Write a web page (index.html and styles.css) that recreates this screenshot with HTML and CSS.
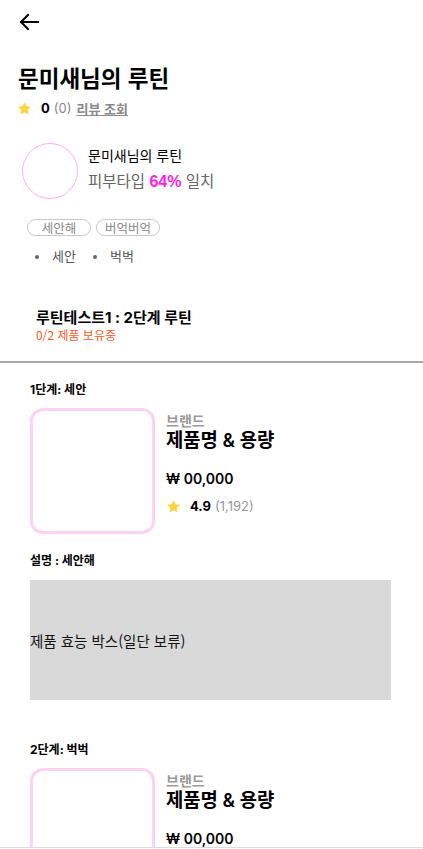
FILE: index.html
```html
<!DOCTYPE html>
<html lang="ko">
<head>
<meta charset="utf-8">
<title>문미새님의 루틴</title>
<link rel="stylesheet" href="styles.css">
</head>
<body>
<header class="top">
  <button class="back" aria-label="뒤로">
    <svg width="24" height="24" viewBox="0 0 24 24" fill="none" stroke="#000" stroke-width="2" stroke-linecap="square"><path d="M21 12H4"/><path d="M11 5l-7 7 7 7"/></svg>
  </button>
</header>
<section class="intro">
  <h1 class="title">문미새님의 루틴</h1>
  <div class="rating">
    <svg class="star" width="15" height="15" viewBox="0 0 24 24"><path fill="#FFD43B" d="M12 1.8l3.1 6.6 7.2.9-5.3 5 1.4 7.1L12 17.9l-6.4 3.5 1.4-7.1-5.3-5 7.2-.9z"/></svg>
    <b class="score">0</b><span class="count">(0)</span><a class="reviews">리뷰 조회</a>
  </div>
  <div class="profile">
    <div class="avatar"></div>
    <div class="profile-info">
      <p class="name">문미새님의 루틴</p>
      <p class="match">피부타입 <strong>64%</strong> 일치</p>
    </div>
  </div>
  <div class="tags"><span class="tag">세안해</span><span class="tag">버억버억</span></div>
  <ul class="step-list"><li>세안</li><li>벅벅</li></ul>
  <div class="summary">
    <h2>루틴테스트1 : 2단계 루틴</h2>
    <p class="owned">0/2 제품 보유중</p>
  </div>
</section>
<hr class="divider">
<section class="steps">
  <article class="step">
    <h3 class="label">1단계: 세안</h3>
    <div class="product">
      <div class="thumb"></div>
      <div class="info">
        <p class="brand">브랜드</p>
        <p class="pname">제품명 &amp; 용량</p>
        <p class="price">₩ 00,000</p>
        <div class="prating">
          <svg width="15" height="15" viewBox="0 0 24 24"><path fill="#FFD43B" d="M12 1.8l3.1 6.6 7.2.9-5.3 5 1.4 7.1L12 17.9l-6.4 3.5 1.4-7.1-5.3-5 7.2-.9z"/></svg>
          <b>4.9</b><span>(1,192)</span>
        </div>
      </div>
    </div>
    <h3 class="label desc">설명 : 세안해</h3>
    <div class="benefit">제품 효능 박스(일단 보류)</div>
  </article>
  <article class="step">
    <h3 class="label">2단계: 벅벅</h3>
    <div class="product">
      <div class="thumb"></div>
      <div class="info">
        <p class="brand">브랜드</p>
        <p class="pname">제품명 &amp; 용량</p>
        <p class="price">₩ 00,000</p>
        <div class="prating">
          <svg width="15" height="15" viewBox="0 0 24 24"><path fill="#FFD43B" d="M12 1.8l3.1 6.6 7.2.9-5.3 5 1.4 7.1L12 17.9l-6.4 3.5 1.4-7.1-5.3-5 7.2-.9z"/></svg>
          <b>4.9</b><span>(1,192)</span>
        </div>
      </div>
    </div>
  </article>
</section>
<nav class="bottom-bar"></nav>
</body>
</html>
```
FILE: styles.css
```css
* { box-sizing: border-box; }
html, body { margin: 0; padding: 0; background: #fff; }
body {
  font-family: "Inter", "Noto Sans CJK KR", sans-serif;
  color: #000;
  overflow: hidden;
}
p, h1, h2, h3 { margin: 0; }

.top { height: 46px; padding: 10px 0 0 17px; }
.back { background: none; border: 0; padding: 0; width: 24px; height: 24px; display: block; }

.intro { padding: 0 18px; }
.title {
  font-family: "Noto Sans CJK KR", sans-serif;
  font-size: 22.5px; font-weight: 700; line-height: 32px;
  margin-top: 15px;
}
.rating {
  display: flex; align-items: center; height: 20px; margin-top: 5px;
  font-size: 13px; color: #888;
}
.rating .star { margin-right: 9px; margin-left: -1px; }
.score { color: #000; font-weight: 700; margin-right: 4px; }
.count { margin-right: 5px; }
.reviews { color: #888; font-weight: 700; text-decoration: underline; font-family: "Noto Sans CJK KR", sans-serif; }

.profile { display: flex; align-items: center; margin-top: 25px; padding-left: 4px; gap: 10px; }
.avatar { width: 56px; height: 56px; border-radius: 50%; border: 1px solid #ffb0e8; flex: none; }
.profile-info { font-family: "Noto Sans CJK KR", sans-serif; }
.name { font-size: 14px; line-height: 20px; margin-top: -6px; }
.match { font-size: 15.5px; line-height: 20px; margin-top: 5px; color: #666; }
.match strong { color: #ff1ee8; font-family: "Liberation Sans", sans-serif; font-weight: 700; font-size: 16px; }

.tags { display: flex; gap: 5px; margin-top: 20px; padding-left: 9px; }
.tag {
  font-family: "Noto Sans CJK KR", sans-serif;
  font-size: 12.5px; color: #888;
  width: 64px; height: 17px;
  display: flex; align-items: center; justify-content: center;
  border: 1px solid #c8c8c8; border-radius: 9px;
}
.step-list {
  list-style: none; margin: 11px 0 0; padding: 0 0 0 17px;
  display: flex; gap: 17px;
  font-family: "Noto Sans CJK KR", sans-serif; font-size: 13px; color: #555; line-height: 18px;
}
.step-list li { position: relative; padding-left: 17px; }
.step-list li::before {
  content: ""; position: absolute; left: 0; top: 8px;
  width: 4px; height: 4px; border-radius: 50%; background: #666;
}

.summary { margin-top: 44px; padding-left: 18px; font-family: "Noto Sans CJK KR", sans-serif; }
.summary h2 { font-size: 15px; font-weight: 700; line-height: 18px; font-family: "Inter", "Noto Sans CJK KR", sans-serif; }
.owned { font-size: 12px; color: #ff5b1e; line-height: 16px; }

.divider { border: 0; height: 2px; background: #a8a8a8; margin: 18px 0 0; }

.steps { padding: 0 32px 0 30px; }
.step { padding-top: 19px; }
.step + .step { padding-top: 42px; }
.label { font-size: 12px; font-weight: 700; line-height: 16px; font-family: "Inter", "Noto Sans CJK KR", sans-serif; }
.product { display: flex; gap: 11px; margin-top: 10px; }
.thumb { width: 125px; height: 126px; border: 3px solid #fdd3ef; border-radius: 13px; flex: none; }
.info { padding-top: 4px; font-family: "Inter", "Noto Sans CJK KR", sans-serif; }
.brand { font-size: 14px; font-weight: 600; color: #9a9a9a; line-height: 18px; }
.pname { font-size: 18.8px; font-weight: 600; line-height: 22px; margin-top: 0; }
.price { font-size: 14px; font-weight: 600; line-height: 18px; margin-top: 18px; }
.prating { display: flex; align-items: center; margin-top: 10px; font-size: 13px; }
.prating svg { margin-right: 9px; }
.prating b { font-weight: 700; margin-right: 4px; }
.prating span { color: #999; }

.desc { margin-top: 19px; }
.benefit {
  margin-top: 11px; height: 120px; background: #d9d9d9;
  display: flex; align-items: center;
  font-family: "Noto Sans CJK KR", sans-serif; font-size: 14.5px; color: #111;
}

.bottom-bar {
  position: fixed; left: 0; right: 0; bottom: 0; height: 2px;
  background: #fff; border-top: 1px solid #ddd;
}
```
